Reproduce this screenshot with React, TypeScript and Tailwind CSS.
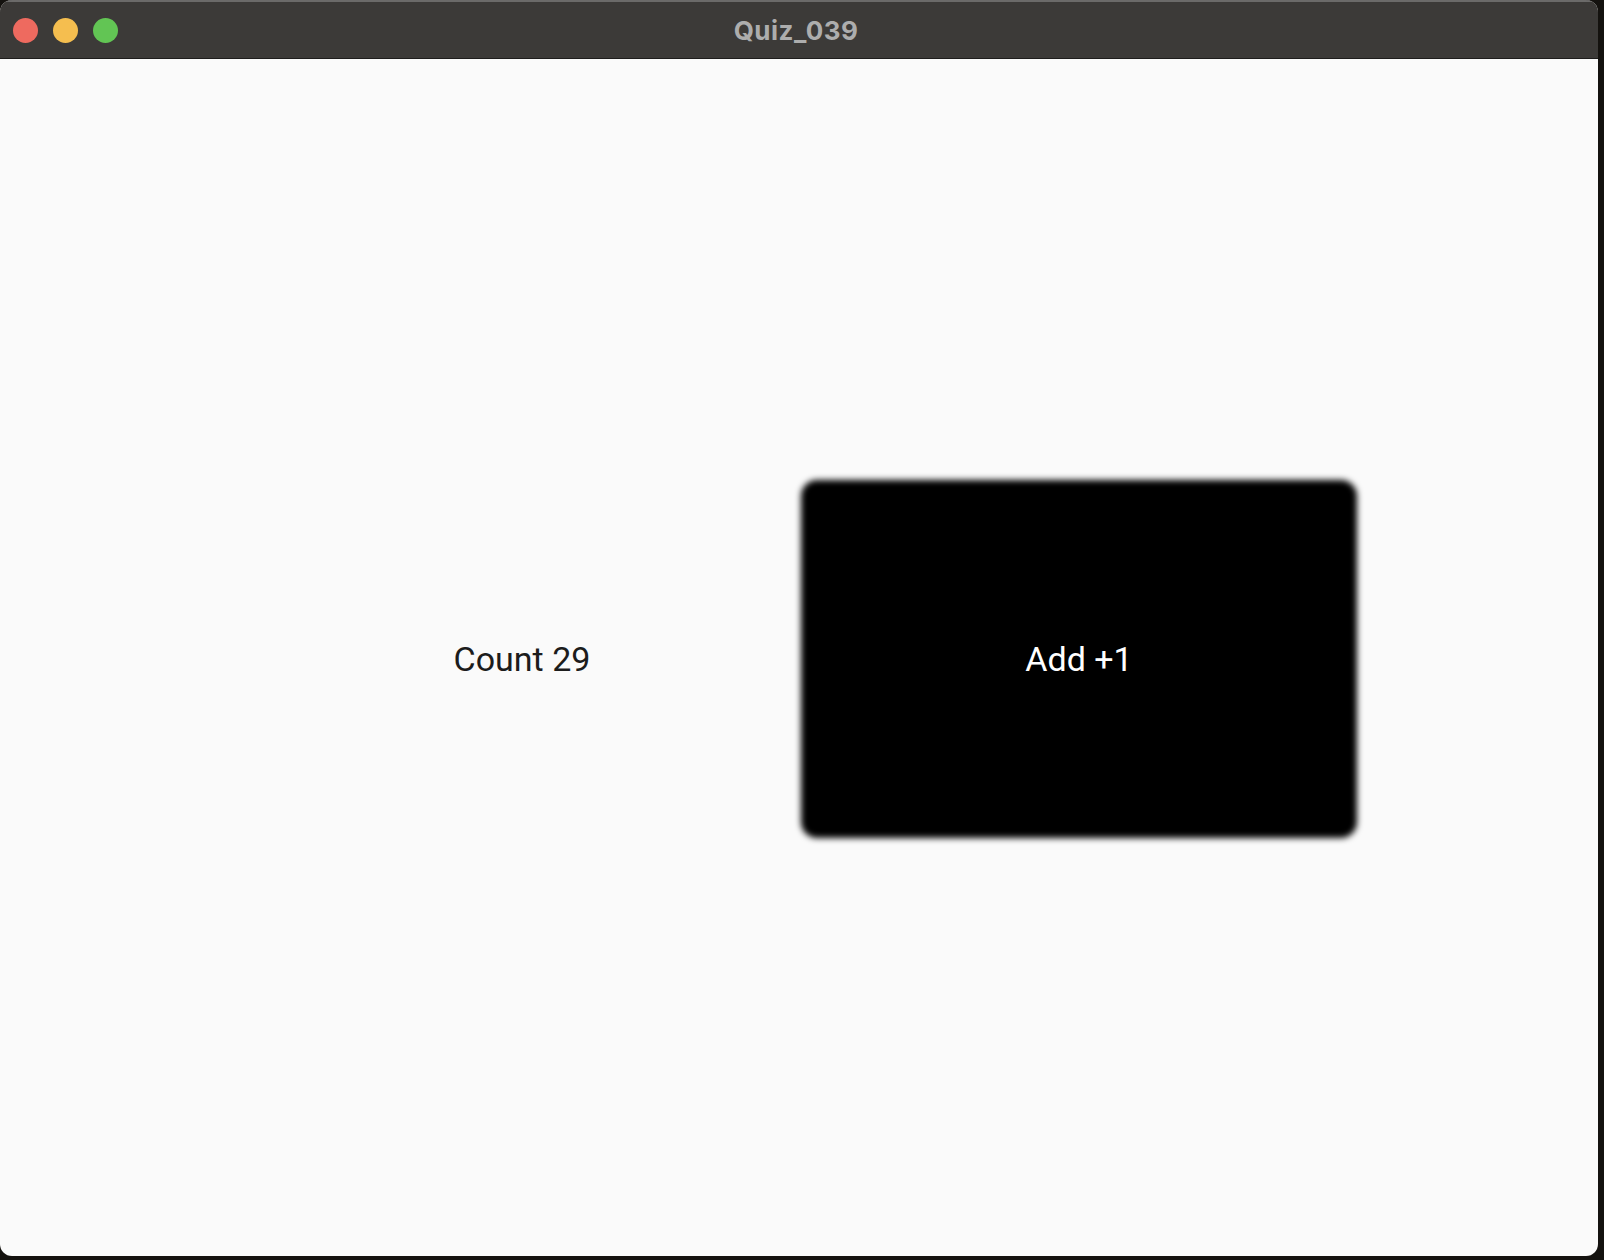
import { useState } from "react";

const App = () => {
  const [count, setCount] = useState(29);

  return (
    <div className="w-[1604px] h-[1260px] bg-[#14120f] flex items-start overflow-hidden">
      <div className="w-[1598px] h-[1256px] rounded-[12px] overflow-hidden flex flex-col bg-[#fafafa]">
        {/* title bar */}
        <div className="h-[59px] shrink-0 bg-[#3c3a38] border-t-[2px] border-[#6b6a69] border-b border-b-[#1e1d1c] flex items-center relative">
          <div className="flex items-center gap-[15px] pl-[13px]">
            <span className="w-[25px] h-[25px] rounded-full bg-[#ee6a5f]" />
            <span className="w-[25px] h-[25px] rounded-full bg-[#f5be4f]" />
            <span className="w-[25px] h-[25px] rounded-full bg-[#62c554]" />
          </div>
          <div className="absolute inset-0 flex items-center justify-center pr-[6px]">
            <span className="font-['Inter',sans-serif] font-bold text-[26px] text-[#adadad] tracking-[0.5px]">
              Quiz_039
            </span>
          </div>
        </div>

        {/* content */}
        <div className="flex-1 flex items-center justify-center pt-[3px]">
          <div className="flex items-center pl-[4px]">
            <div className="w-[556px] h-[360px] flex items-center justify-center font-['Roboto',sans-serif] text-[34px] text-[#1c1c1c]">
              Count {count}
            </div>
            <button
              onClick={() => setCount(count + 1)}
              className="relative w-[558px] h-[360px] flex items-center justify-center font-['Roboto',sans-serif] text-[34px] text-white"
            >
              <span className="absolute inset-[1px] rounded-[16px] bg-black blur-[3px]" />
              <span className="relative">Add +1</span>
            </button>
          </div>
        </div>
      </div>
    </div>
  );
};

export default App;
